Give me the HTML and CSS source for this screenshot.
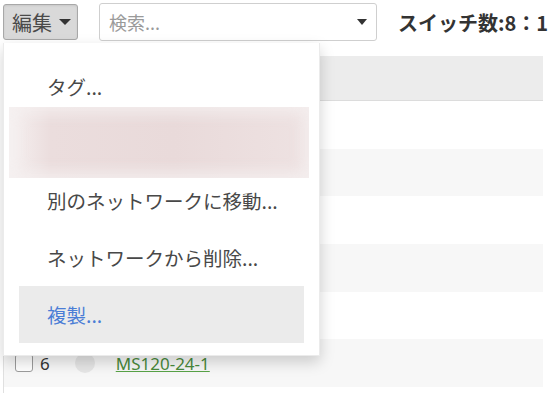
FILE: index.html
```html
<!DOCTYPE html>
<html lang="ja">
<head>
<meta charset="utf-8">
<link rel="stylesheet" href="styles.css">
</head>
<body>
<div class="page">
  <div class="toolbar">
    <button class="btn-edit">編集<span class="caret"></span></button>
    <div class="search"><span class="ph">検索...</span><span class="caret"></span></div>
    <div class="count">スイッチ数:8：1</div>
  </div>
  <div class="table">
    <div class="thead"></div>
    <div class="row"></div>
    <div class="row alt"></div>
    <div class="row"></div>
    <div class="row alt"></div>
    <div class="row"></div>
    <div class="row alt">
      <span class="check"></span>
      <span class="num">6</span>
      <span class="dot"></span>
      <a class="link" href="#">MS120-24-1</a>
    </div>
  </div>
  <div class="menu">
    <div class="item">タグ...</div>
    <div class="item blurred"><div class="blur"></div></div>
    <div class="item">別のネットワークに移動...</div>
    <div class="item">ネットワークから削除...</div>
    <div class="item active">複製...</div>
  </div>
</div>
</body>
</html>
```
FILE: styles.css
```css
html, body {
  margin: 0;
  padding: 0;
  background: #fff;
  overflow: hidden;
}
body {
  font-family: "Noto Sans CJK JP", "Noto Sans", sans-serif;
  color: #444;
}
.page {
  position: relative;
  width: 550px;
  height: 401px;
  overflow: hidden;
}
.toolbar {
  display: flex;
  align-items: center;
  height: 44px;
  padding-left: 3px;
  white-space: nowrap;
}
.toolbar > * {
  flex-shrink: 0;
}
.btn-edit {
  display: flex;
  align-items: center;
  box-sizing: border-box;
  width: 75px;
  height: 36px;
  padding: 0 0 0 8px;
  margin: 0;
  background: #d9d9d9;
  border: 1px solid #a8a8a8;
  border-radius: 3px;
  box-shadow: inset 0 1px 2px rgba(0,0,0,0.08);
  font-family: "Noto Sans CJK JP", sans-serif;
  font-size: 20px;
  color: #4a4a4a;
}
.caret {
  display: inline-block;
  width: 0;
  height: 0;
  border-left: 6px solid transparent;
  border-right: 6px solid transparent;
  border-top: 6px solid #333;
}
.btn-edit .caret {
  margin-left: 7px;
}
.search {
  display: flex;
  align-items: center;
  justify-content: space-between;
  box-sizing: border-box;
  width: 278px;
  height: 38px;
  margin-left: 21px;
  padding: 0 9px 0 9px;
  border: 1px solid #cfcfcf;
  border-radius: 3px;
  background: #fff;
}
.search .ph {
  font-size: 18px;
  color: #9a9a9a;
}
.search .caret {
  border-left-width: 5px;
  border-right-width: 5px;
  border-top-width: 6px;
}
.count {
  margin-left: 21px;
  font-size: 20px;
  font-weight: bold;
  color: #333;
}
.table {
  box-sizing: border-box;
  width: 540px;
  margin: 12px 0 0 3px;
  border-left: 1px solid #e0e0e0;
  padding-bottom: 6px;
}
.thead {
  height: 44px;
  background: #ececec;
  border-bottom: 1px solid #dcdcdc;
}
.row {
  display: flex;
  align-items: center;
  height: 47.7px;
  background: #fff;
  padding-left: 11px;
}
.row.alt {
  background: #f7f7f7;
}
.check {
  box-sizing: border-box;
  width: 18px;
  height: 18px;
  border: 1.5px solid #9c9c9c;
  border-radius: 3px;
  background: #fff;
}
.num {
  margin-left: 7px;
  font-family: "Noto Sans", sans-serif;
  font-size: 17px;
  color: #333;
}
.dot {
  width: 20px;
  height: 20px;
  margin-left: 25px;
  border-radius: 50%;
  background: #e6e6e6;
}
.link {
  margin-left: 21px;
  font-family: "Noto Sans", sans-serif;
  font-size: 17px;
  color: #4a8a3c;
  text-decoration: underline;
  text-decoration-color: #58a347;
}
.menu {
  position: absolute;
  left: 3px;
  top: 43px;
  box-sizing: border-box;
  width: 317px;
  padding: 15px 0 12px;
  background: #fff;
  border: 1px solid rgba(0,0,0,0.08);
  border-top: none;
  box-shadow: 0 6px 14px rgba(0,0,0,0.18);
}
.item {
  display: flex;
  align-items: center;
  height: 57px;
  padding-left: 43px;
  font-size: 19.5px;
  color: #484848;
  white-space: nowrap;
}
.item.blurred {
  height: 71px;
  margin: -8px 10px -6px 5px;
  padding: 0;
  overflow: hidden;
}
.blur {
  width: 100%;
  height: 100%;
  background: linear-gradient(to right, #f6f1f1 0%, #ebdddd 14%, #e9dada 55%, #eee2e2 100%);
  box-shadow: inset 0 0 14px 6px rgba(245,240,240,0.85);
}
.item.active {
  margin: 0 15px 0 15px;
  padding-left: 28px;
  background: #ebebeb;
  color: #4a7dd6;
}
```
